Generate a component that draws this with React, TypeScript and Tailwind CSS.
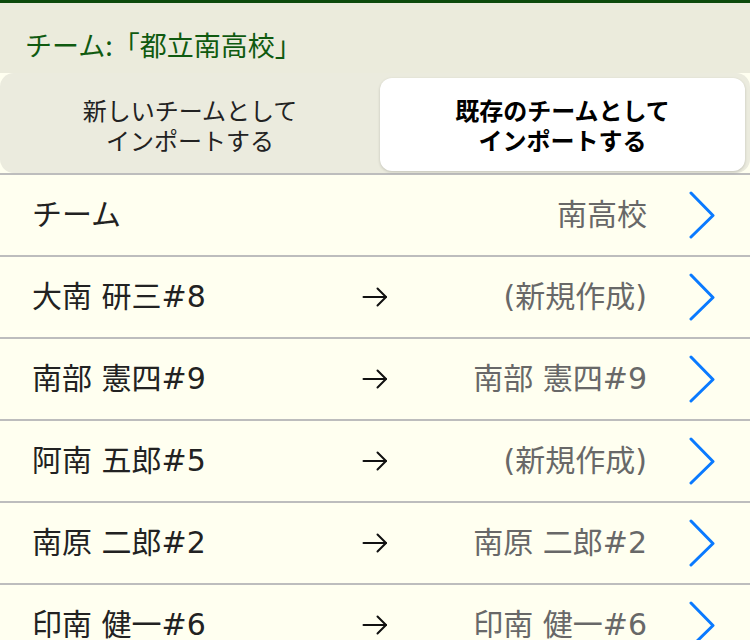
import React from "react";

type Row = {
  name: string;
  target: string;
  arrow?: boolean;
};

const rows: Row[] = [
  { name: "チーム", target: "南高校" },
  { name: "大南 研三#8", target: "(新規作成)", arrow: true },
  { name: "南部 憲四#9", target: "南部 憲四#9", arrow: true },
  { name: "阿南 五郎#5", target: "(新規作成)", arrow: true },
  { name: "南原 二郎#2", target: "南原 二郎#2", arrow: true },
  { name: "印南 健一#6", target: "印南 健一#6", arrow: true },
];

const font = { fontFamily: '"Noto Sans CJK JP", "Noto Sans", sans-serif' };
// latin glyphs in the rows are wide, DejaVu fits them best; kana/kanji fall through to Noto CJK
const rowFont = { fontFamily: '"DejaVu Sans", "Noto Sans CJK JP", sans-serif' };

const Arrow = () => (
  <svg width="26" height="20" viewBox="0 0 26 20" fill="none" stroke="#111" strokeWidth="2" strokeLinecap="round" strokeLinejoin="round">
    <path d="M1.5 10H24" />
    <path d="M15.5 1.5L24 10L15.5 18.5" />
  </svg>
);

const Chevron = () => (
  <svg width="26" height="48" viewBox="0 0 26 48" fill="none" stroke="#0a7aff" strokeWidth="3" strokeLinecap="round" strokeLinejoin="round">
    <path d="M2 2L24 24.5L2 46" />
  </svg>
);

const App = () => {
  return (
    <div className="h-[640px] w-[750px] overflow-hidden bg-[#fffff0]" style={font}>
      <header className="border-t-[3px] border-[#0c4a0c] bg-[#ebebdc]">
        <h1 className="h-[70px] pl-[25px] pt-[26px] text-[27px] leading-[32px] font-normal text-[#0f5a10]">
          チーム:「都立南高校」
        </h1>
      </header>
      <div className="border-b-2 border-[#bdbdbd] bg-[#fffff0]">
        <div className="flex h-[100px] rounded-[14px] bg-[#ebebde] pt-[5px] pr-[5px] pb-[2px]">
          <button className="flex flex-1 items-center justify-center text-center text-[24px] leading-[30px] text-[#222]">
            新しいチームとして
            <br />
            インポートする
          </button>
          <button className="flex w-[365px] items-center justify-center rounded-[12px] bg-white text-center text-[24px] font-bold leading-[30px] text-black shadow-[0_1px_3px_rgba(0,0,0,0.18)]">
            既存のチームとして
            <br />
            インポートする
          </button>
        </div>
      </div>
      <ul style={rowFont}>
        {rows.map((row) => (
          <li
            key={row.name}
            className="grid h-[82px] grid-cols-[330px_26px_259px_42px_26px] items-center border-b-2 border-[#bdbdbd] pl-[32px] pr-[35px]"
          >
            <span className="text-[30px] leading-none text-[#222] whitespace-nowrap">{row.name}</span>
            <span className="flex items-center">{row.arrow && <Arrow />}</span>
            <span className="text-right text-[30px] leading-none text-[#686868] whitespace-nowrap">{row.target}</span>
            <span />
            <span className="flex items-center">
              <Chevron />
            </span>
          </li>
        ))}
      </ul>
    </div>
  );
};

export default App;
